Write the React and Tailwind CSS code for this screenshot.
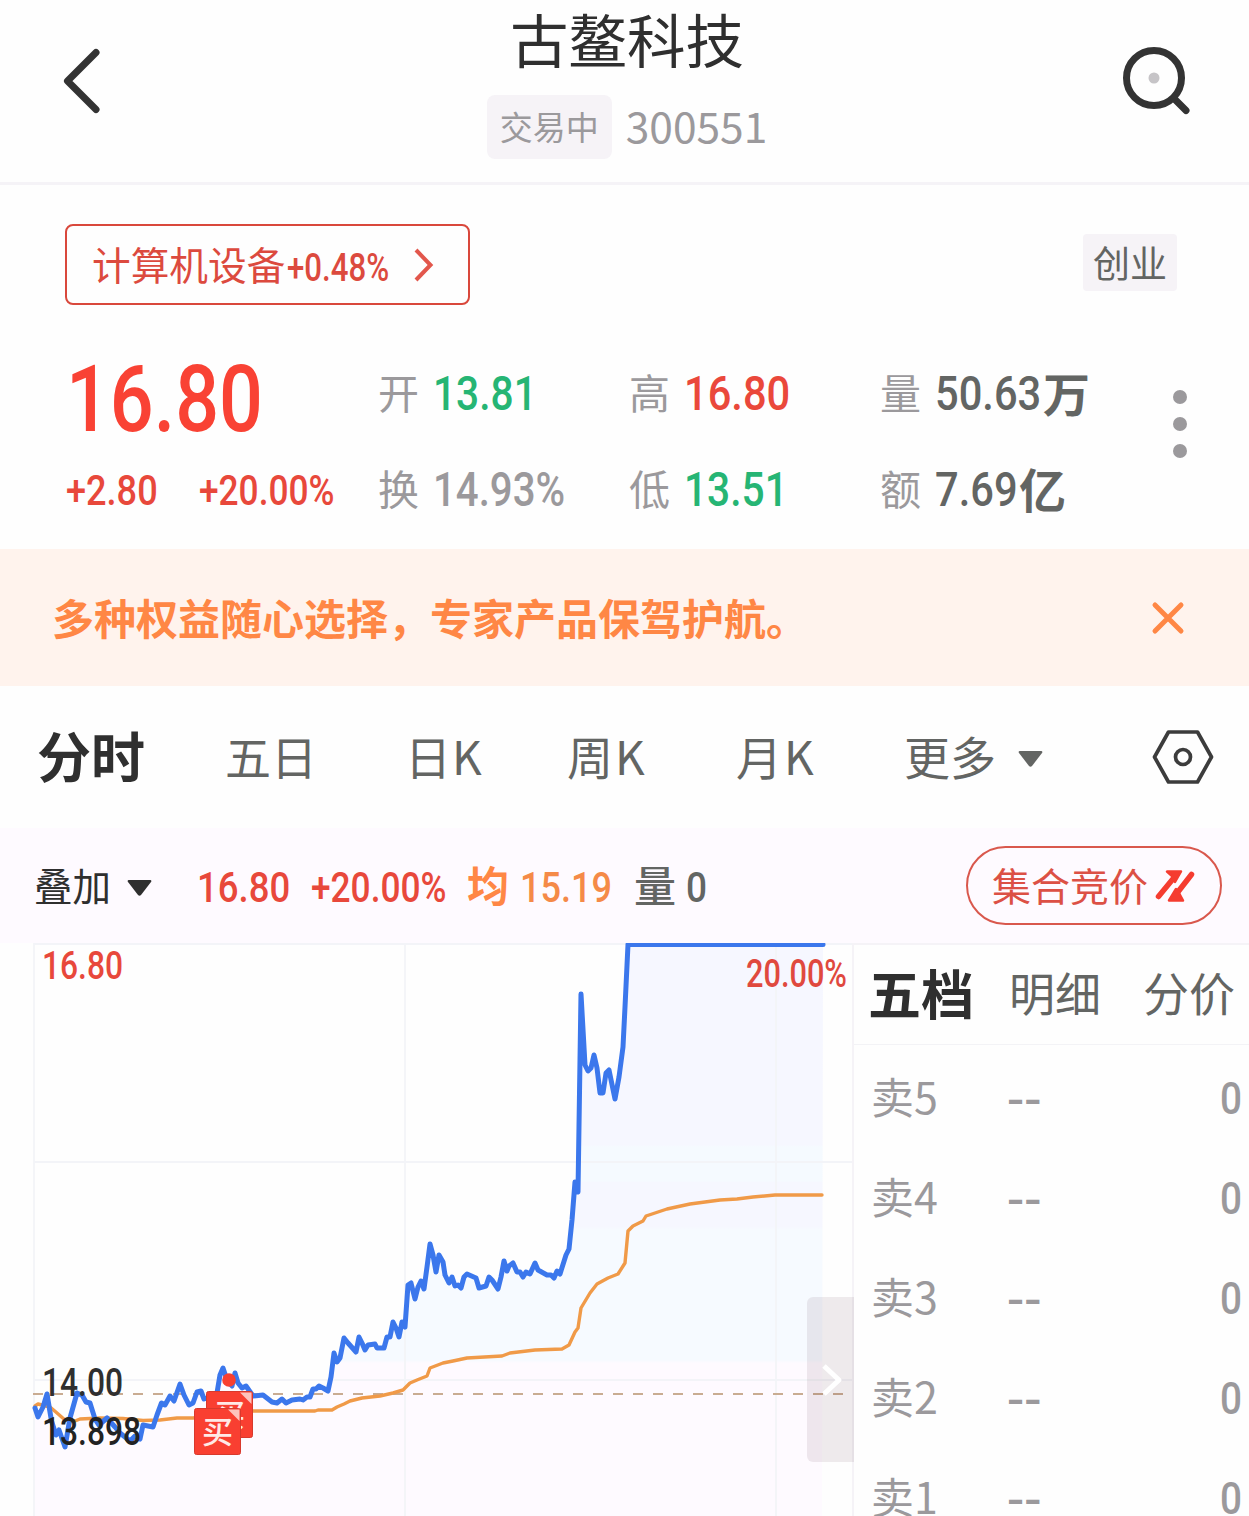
const RED = '#f53c30';

const pricePoints =
  '35,1408 38,1417 43,1407 47,1394 51.5,1421 56,1435 59,1430 65,1447 70,1418 77,1393 82,1395 86,1402 90,1403 95,1419 99,1425 107,1418 115,1427 120,1433 130,1441 135,1436 140,1439 143,1425 153,1427 157,1415 161.5,1403 165,1405 170,1396 174,1401 180,1384 184,1395 189,1405 193,1403 197,1392 201,1391 204,1399 207,1398 217,1393 220,1375 223,1368 227,1380 232,1386 235,1373 238,1383 242,1388 246,1386 253,1396 263,1395 272,1402 277,1403 282,1399 286,1403 292,1400 300,1399 303,1400 307,1397 310,1397 313,1389 316,1389 319,1386 323,1388 328,1391 331,1377 334,1353 337,1362 340,1358 344,1338 348,1343 356,1352 359,1337 362,1343 365,1350 368,1345 375,1344 377,1348 384,1348 387,1337 390,1337 393,1322 396,1328 399,1337 402,1322 405,1327 408,1285 411,1283 415,1299 418,1287 421,1281 424,1289 427,1267 430,1244 433,1255 436,1272 439,1255 443,1262 445,1275 449,1283 452,1277 455,1286 458,1285 461,1288 464,1277 467,1274 476,1278 479,1288 486,1286 489,1277 492,1280 498,1289 501,1277 504,1261 507,1271 509,1266 513,1263 517,1272 520,1272 523,1277 526,1272 530,1274 535,1263 538,1270 547,1275 551,1275 554,1278 557,1271 560,1274 566,1255 569,1249 572,1220 575,1182 578,1192 581,994 585,1065 588,1071 591,1068 594,1055 597,1068 600,1093 603,1093 606,1073 609,1070 615,1099 619,1077 623,1047 625,1007 628,944.5 823,944.5';

const averagePoints =
  '35,1406 38,1404 50,1407 57,1413 65,1420 75,1421 80,1419 100,1418 123,1418.5 143,1420.5 160,1420 177,1418 193,1418 225,1414 253,1411 315,1411 318,1410 332,1410 337,1407 344,1404 350,1401 362,1398 380,1396 393,1393 403,1390 410,1383 417,1380 427,1376 430,1368 443,1363 453,1361 467,1358 502,1356 510,1353 535,1350 562,1349 569,1345 575,1332 578,1328 581,1308 590,1293 597,1284 608,1278 618,1274 625,1263 628,1231 633,1226 643,1221 646,1216 667,1209 690,1204 720,1200 737,1199 753,1197 775,1195 822,1195';

const sellOrders = [
  { level: 5, price: '--', amount: 0 },
  { level: 4, price: '--', amount: 0 },
  { level: 3, price: '--', amount: 0 },
  { level: 2, price: '--', amount: 0 },
  { level: 1, price: '--', amount: 0 },
];

// Narrow figures: the inner span is squeezed, the outer one keeps the layout width
const Num = ({ className, scale = 'scale-x-[.83]', children }) => (
  <span className={`block shrink-0 whitespace-nowrap font-['Roboto',sans-serif] font-medium leading-none ${className}`}>
    <span className={`inline-block origin-left ${scale}`}>{children}</span>
  </span>
);

const Stat = ({ label, value, unit, color, width, scale }) => (
  <div className="flex h-[50px] items-center">
    <span className="-mt-[5px] w-[55px] shrink-0 text-[41px] leading-none text-[#9b999c]">{label}</span>
    <Num className={`-mt-px text-[49px] ${width} ${color}`} scale={scale}>{value}</Num>
    {unit && <span className="-mt-[6px] shrink-0 text-[47px] font-bold leading-none text-[#636563]">{unit}</span>}
  </div>
);

const Header = () => (
  <header className="flex h-[185px] items-start justify-between border-b-3 border-[#f5f3f7] pl-[62px] pr-[55px]">
    <svg className="mt-[46px] h-[70px] w-[40px]" viewBox="0 0 40 70" fill="none" stroke="#333" strokeWidth="7" strokeLinecap="round" strokeLinejoin="round">
      <path d="M34 6.500L5.500 35L34 63.500" />
    </svg>
    <div className="flex flex-col items-center pl-[32px]">
      <h1 className="mt-[9px] text-[58.500px] leading-none text-[#2f2f2f]">古鳌科技</h1>
      <div className="mt-[27.500px] flex items-center">
        <span className="flex h-16 w-[125px] items-center justify-center rounded-lg bg-[#f6f3f7] pb-0.5 text-[33px] leading-none text-[#9b999c]">交易中</span>
        <span className="-mt-[3px] ml-[14px] text-[42.500px] leading-none text-[#9b999c]">300551</span>
      </div>
    </div>
    <svg className="mt-[44px] h-[74px] w-[74px]" viewBox="0 0 74 74" fill="none" stroke="#333" strokeWidth="7" strokeLinecap="round">
      <circle cx="34" cy="34" r="27.500" />
      <path d="M54 54.500L66 66.500" />
      <circle cx="34" cy="34" r="5.500" fill="#c6c4c7" stroke="none" />
    </svg>
  </header>
);

const Quote = () => (
  <section className="h-[364px] pt-[39px]">
    <div className="flex items-start justify-between pl-[65px] pr-[72px]">
      <button className="flex h-[81px] w-[405px] items-center rounded-lg border-2 border-[#d9483c] pl-[25px] text-[#dc4a3e]">
        <span className="-mt-0.5 text-[38.700px] leading-none">计算机设备</span>
        <Num className="w-[129px] pl-px pt-2 text-[39px]" scale="scale-x-[.8]">+0.48%</Num>
        <svg className="h-9 w-5" viewBox="0 0 20 36" fill="none" stroke="#e2574c" strokeWidth="4">
          <path d="M2 3L16.500 18L2 33" />
        </svg>
      </button>
      <span className="mt-[10px] flex h-[57px] w-[94px] items-center justify-center rounded bg-[#f6f3f7] text-[37px] leading-none text-[#636563]">创业</span>
    </div>

    <div className="mt-[50px] flex pl-[66px]">
      <div className="w-[312px]">
        <Num className="-mt-[2px] text-[93px] text-[#f94234]">16.80</Num>
        <div className="mt-[23px] flex text-[#e8483b]">
          <Num className="w-[133px] text-[43px]" scale="scale-x-[.84]">+2.80</Num>
          <Num className="text-[43px]" scale="scale-x-[.82]">+20.00%</Num>
        </div>
      </div>
      <div className="grid h-fit grid-cols-[251px_251px_293px] gap-y-[46px] pt-[14px]">
        <Stat label="开" value="13.81" color="text-[#26b574]" width="w-[110px]" />
        <Stat label="高" value="16.80" color="text-[#ea483b]" width="w-[110px]" scale="scale-x-[.85]" />
        <Stat label="量" value="50.63" unit="万" color="text-[#636563]" width="w-[108px]" scale="scale-x-[.85]" />
        <Stat label="换" value="14.93%" color="text-[#9b999c]" width="w-[130px]" scale="scale-x-[.82]" />
        <Stat label="低" value="13.51" color="text-[#26b574]" width="w-[110px]" />
        <Stat label="额" value="7.69" unit="亿" color="text-[#636563]" width="w-[84px]" scale="scale-x-[.85]" />
      </div>
      <div className="flex flex-col gap-[13px] pt-[35px]">
        <i className="size-3.5 rounded-full bg-[#9b999c]" />
        <i className="size-3.5 rounded-full bg-[#9b999c]" />
        <i className="size-3.5 rounded-full bg-[#9b999c]" />
      </div>
    </div>
  </section>
);

const Banner = () => (
  <section className="flex h-[137px] items-center justify-between bg-[#fff3ed] pl-[52px] pr-[63px]">
    <p className="-mt-px text-[42px] font-bold leading-none text-[#ff8745]">多种权益随心选择，专家产品保驾护航。</p>
    <svg className="h-9 w-9" viewBox="0 0 36 36" stroke="#ff8745" strokeWidth="5" strokeLinecap="round">
      <path d="M5 5L31 31M31 5L5 31" />
    </svg>
  </section>
);

const ChartTabs = () => (
  <nav className="flex h-[142px] items-center pl-[37px] text-[46px] leading-none text-[#636563]">
    <span className="-mt-1 w-[188px] text-[54px] font-bold text-[#2f2f2f]">分时</span>
    <span className="-mt-1 w-[180px]">五日</span>
    <span className="-mt-1 w-[162px] tracking-[1px]">日K</span>
    <span className="-mt-1 w-[169px] tracking-[2px]">周K</span>
    <span className="-mt-1 w-[168px] tracking-[2px]">月K</span>
    <span className="-mt-1 w-[114px]">更多</span>
    <svg className="mt-1 h-4 w-[25px]" viewBox="0 0 25 16" fill="#636563">
      <path d="M1.500 0H23.500Q25 0.500 24 2L14 15Q12.500 16.500 11 15L1 2Q0 0.500 1.500 0Z" />
    </svg>
    <svg className="ml-[108px] h-[56px] w-[64px]" viewBox="0 0 64 56" fill="none" stroke="#3c3c3c" strokeWidth="3.700" strokeLinejoin="round">
      <path d="M17.500 3H46.500L60.500 28L46.500 53H17.500L3.500 28Z" />
      <circle cx="32" cy="28" r="7.500" />
    </svg>
  </nav>
);

const ChartLegend = () => (
  <section className="flex h-[115px] items-center bg-[#fefaff] pl-[34px] pr-[27px] leading-none">
    <span className="-mt-0.5 w-[93px] text-[38.500px] text-[#2f2f2f]">叠加</span>
    <svg className="mt-1 h-4 w-[25px]" viewBox="0 0 25 16" fill="#2f2f2f">
      <path d="M1.500 0H23.500Q25 0.500 24 2L14 15Q12.500 16.500 11 15L1 2Q0 0.500 1.500 0Z" />
    </svg>
    <Num className="ml-[45px] mt-1 w-[114px] text-[43px] text-[#e8483b]" scale="scale-x-[.85]">16.80</Num>
    <Num className="mt-1 w-[156px] text-[43px] text-[#e8483b]" scale="scale-x-[.82]">+20.00%</Num>
    <span className="-mt-1 text-[42px] font-bold text-[#ff8745]">均</span>
    <Num className="ml-[11px] mt-1 w-[114px] text-[43px] text-[#f58a48]" scale="scale-x-[.84]">15.19</Num>
    <span className="-mt-1 text-[42px] font-medium text-[#636563]">量</span>
    <Num className="ml-[10px] mt-1 text-[43px] text-[#636563]" scale="scale-x-[.86]">0</Num>
    <button className="ml-auto flex h-[79px] w-[256px] items-center rounded-full border-2 border-[#d9584d] pl-6 text-[#dc5045]">
      <span className="-mt-0.5 text-[39px]">集合竞价</span>
      <svg className="ml-[5px] h-9 w-11" viewBox="0 0 44 36" fill="none" stroke={RED} strokeWidth="5.500" strokeLinecap="round">
        <path d="M5.500 28.500L24 6M38.500 6.500L21 29" />
        <path d="M14 3.500H28L22 14L19 8ZM16 32.500H30L26.500 26L23 21Z" fill={RED} strokeWidth="2.500" strokeLinejoin="round" />
      </svg>
    </button>
  </section>
);

const BuyTag = ({ x, y }) => (
  <g transform={`translate(${x} ${y})`}>
    <rect x="0.500" y="0.500" width="46" height="46" rx="2" fill="#f93f31" stroke="#d8392d" />
    <path d="M34 1.500H45.500V13Z" fill="#fdc3bd" />
    <text x="8" y="35" fontSize="31" fontWeight="500" fill="#ffe9e6">买</text>
  </g>
);

const MinuteChart = () => (
  <div className="relative h-[573px] w-[852px] shrink-0">
    <svg className="block h-full w-full font-['Roboto','Noto_Sans_CJK_SC',sans-serif]" viewBox="0 943 852 573" fill="none">
      <defs>
        <linearGradient id="area" gradientUnits="userSpaceOnUse" x1="0" y1="943" x2="0" y2="1516">
          <stop offset="0" stopColor="#f6f7ff" />
          <stop offset="0.352" stopColor="#f6f7ff" />
          <stop offset="0.356" stopColor="#f5faff" />
          <stop offset="0.415" stopColor="#f5faff" />
          <stop offset="0.418" stopColor="#f6f7ff" />
          <stop offset="0.495" stopColor="#f6f7ff" />
          <stop offset="0.500" stopColor="#f6faff" />
          <stop offset="0.728" stopColor="#f6faff" />
          <stop offset="0.733" stopColor="#fefaff" />
          <stop offset="1" stopColor="#fefaff" />
        </linearGradient>
      </defs>
      <polygon points={`34,1516 ${pricePoints} 822,1516`} fill="url(#area)" />
      <path d="M34 943V1516M405 943V1516M776 943V1516M34 1162H853M34 1380H853M34 944H853" stroke="#f3f4f8" strokeWidth="1.800" />
      <path d="M33 1394H853" stroke="#c9ac92" strokeWidth="2" strokeDasharray="10 10" />
      <polyline points={averagePoints} stroke="#f09a48" strokeWidth="3.400" strokeLinejoin="round" strokeLinecap="round" />
      <polyline points={pricePoints} stroke="#3b77ec" strokeWidth="5" strokeLinejoin="round" strokeLinecap="round" />
      <circle cx="229" cy="1380" r="6.800" fill="#f93f31" />
      <BuyTag x={206} y={1391} />
      <BuyTag x={194} y={1408} />
      <g fontSize="38" fontWeight="500">
        <text x="42" y="979" textLength="81" lengthAdjust="spacingAndGlyphs" fill="#e8483b">16.80</text>
        <text x="746" y="987" textLength="101" lengthAdjust="spacingAndGlyphs" fill="#e0493e">20.00%</text>
        <text x="42" y="1396" textLength="81" lengthAdjust="spacingAndGlyphs" fill="#2f2f2f">14.00</text>
        <text x="42" y="1445" textLength="99" lengthAdjust="spacingAndGlyphs" fill="#222">13.898</text>
      </g>
    </svg>
    <button className="absolute -right-0.5 top-[354px] flex h-[165px] w-[47px] items-center justify-center rounded-l-md bg-[#4a1c35]/9">
      <svg className="ml-0.5 h-9 w-6" viewBox="0 0 24 36" stroke="#fff" strokeWidth="5" fill="none" strokeLinejoin="round">
        <path d="M4 4L19 18L4 32" />
      </svg>
    </button>
  </div>
);

const OrderBook = () => (
  <div className="flex-1 border-l-2 border-t-2 border-[#f5f3f7]">
    <div className="flex h-[100px] items-center border-b border-[#f3f3f6] pl-[14px] text-[46px] leading-none text-[#636563]">
      <span className="-mt-1 w-[141px] text-[53px] font-bold text-[#2f2f2f]">五档</span>
      <span className="-mt-[7px] w-[134px]">明细</span>
      <span className="-mt-[7px] shrink-0">分价</span>
    </div>
    <div className="pt-1 text-[#9b999c]">
      {sellOrders.map(order => (
        <div key={order.level} className="flex h-[100px] items-center pl-[17px]">
          <span className="-mt-[7px] w-[136px] text-[43px] leading-none">卖{order.level}</span>
          <Num className="w-[213px] text-[45px]" scale="scale-x-[1.13]">{order.price}</Num>
          <Num className="-mt-0.5 text-[45px]" scale="scale-x-[.86]">{order.amount}</Num>
        </div>
      ))}
    </div>
  </div>
);

const App = () => {
  return (
    <div className="h-[1516px] w-[1249px] overflow-hidden bg-[#fefefe] font-['Noto_Sans_CJK_SC',sans-serif]">
      <Header />
      <Quote />
      <Banner />
      <ChartTabs />
      <ChartLegend />
      <main className="flex h-[573px] overflow-hidden">
        <MinuteChart />
        <OrderBook />
      </main>
    </div>
  );
};

export default App;
